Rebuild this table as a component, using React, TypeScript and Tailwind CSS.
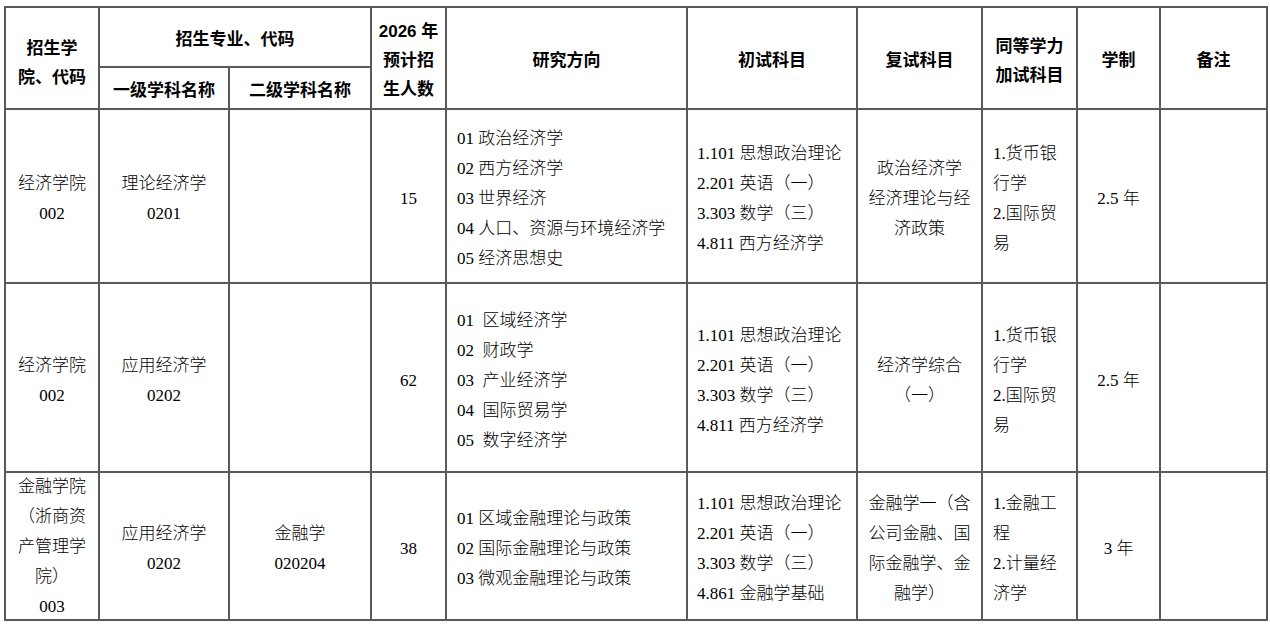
import React from 'react';

type Row = {
  college: string[];
  major1: string[];
  major2: string[];
  count: string;
  directions: string[];
  exams: string[];
  retest: string[];
  extra: string[];
  years: string;
  h: string;
};

const rows: Row[] = [
  {
    college: ['经济学院', '002'],
    major1: ['理论经济学', '0201'],
    major2: [],
    count: '15',
    directions: ['01 政治经济学', '02 西方经济学', '03 世界经济', '04 人口、资源与环境经济学', '05 经济思想史'],
    exams: ['1.101 思想政治理论', '2.201 英语（一）', '3.303 数学（三）', '4.811 西方经济学'],
    retest: ['政治经济学', '经济理论与经', '济政策'],
    extra: ['1.货币银', '行学', '2.国际贸', '易'],
    years: '2.5 年',
    h: 'h-[174px]',
  },
  {
    college: ['经济学院', '002'],
    major1: ['应用经济学', '0202'],
    major2: [],
    count: '62',
    directions: ['01  区域经济学', '02  财政学', '03  产业经济学', '04  国际贸易学', '05  数字经济学'],
    exams: ['1.101 思想政治理论', '2.201 英语（一）', '3.303 数学（三）', '4.811 西方经济学'],
    retest: ['经济学综合', '（一）'],
    extra: ['1.货币银', '行学', '2.国际贸', '易'],
    years: '2.5 年',
    h: 'h-[189px]',
  },
  {
    college: ['金融学院', '（浙商资', '产管理学', '院）', '003'],
    major1: ['应用经济学', '0202'],
    major2: ['金融学', '020204'],
    count: '38',
    directions: ['01 区域金融理论与政策', '02 国际金融理论与政策', '03 微观金融理论与政策'],
    exams: ['1.101 思想政治理论', '2.201 英语（一）', '3.303 数学（三）', '4.861 金融学基础'],
    retest: ['金融学一（含', '公司金融、国', '际金融学、金', '融学）'],
    extra: ['1.金融工', '程', '2.计量经', '济学'],
    years: '3 年',
    h: 'h-[148px]',
  },
];

const td = 'border-2 border-[#5a5a5a] align-middle p-0 pt-[6px]';
const th = 'border-2 border-[#5a5a5a] align-middle p-0 pt-[5px] text-center font-bold leading-[29px]';

const Lines = ({ items, className = '' }: { items: string[]; className?: string }) => (
  <div className={className}>
    {items.map((t, i) => (
      <div key={i} className="whitespace-pre">
        {t}
      </div>
    ))}
  </div>
);

export default function App() {
  return (
    <div className="min-h-[626px] w-[1270px] bg-white pt-[6px] pl-[4px] text-black">
      <table className="w-[1262px] table-fixed border-collapse text-[17px]">
        <colgroup>
          <col className="w-[94px]" />
          <col className="w-[130px]" />
          <col className="w-[142px]" />
          <col className="w-[75px]" />
          <col className="w-[241px]" />
          <col className="w-[170px]" />
          <col className="w-[125px]" />
          <col className="w-[95px]" />
          <col className="w-[83px]" />
          <col className="w-[107px]" />
        </colgroup>
        <thead className="font-['Liberation_Sans','Noto_Sans_CJK_SC',sans-serif]">
          <tr className="h-[60px]">
            <th rowSpan={2} className={`${th} !pt-[2px]`}>
              <div className="pt-[8px]">招生学</div>
              <div>院、代码</div>
            </th>
            <th colSpan={2} className={th}>
              招生专业、代码
            </th>
            <th rowSpan={2} className={th}>
              <div>2026 年</div>
              <div>预计招</div>
              <div>生人数</div>
            </th>
            <th rowSpan={2} className={th}>研究方向</th>
            <th rowSpan={2} className={th}>初试科目</th>
            <th rowSpan={2} className={th}>复试科目</th>
            <th rowSpan={2} className={th}>
              <div>同等学力</div>
              <div>加试科目</div>
            </th>
            <th rowSpan={2} className={th}>学制</th>
            <th rowSpan={2} className={th}>备注</th>
          </tr>
          <tr className="h-[42px]">
            <th className={th}>一级学科名称</th>
            <th className={th}>二级学科名称</th>
          </tr>
        </thead>
        <tbody className="font-['Liberation_Serif','Noto_Sans_CJK_SC',serif] font-light leading-[30px]">
          {rows.map((r, i) => (
            <tr key={i} className={r.h}>
              <td className={r.college.length > 3 ? `${td} !pt-0` : td}>
                <Lines items={r.college} className={r.college.length > 3 ? 'text-center -mt-[1px] -mb-[3px]' : 'text-center'} />
              </td>
              <td className={td}>
                <Lines items={r.major1} className="text-center" />
              </td>
              <td className={td}>
                <Lines items={r.major2} className="text-center" />
              </td>
              <td className={`${td} text-center`}>{r.count}</td>
              <td className={td}>
                <Lines items={r.directions} className="pl-[10px]" />
              </td>
              <td className={td}>
                <Lines items={r.exams} className="pl-[9px]" />
              </td>
              <td className={td}>
                <Lines items={r.retest} className="text-center" />
              </td>
              <td className={td}>
                <Lines items={r.extra} className="pl-[10px]" />
              </td>
              <td className={`${td} text-center`}>{r.years}</td>
              <td className={td}></td>
            </tr>
          ))}
        </tbody>
      </table>
    </div>
  );
}
